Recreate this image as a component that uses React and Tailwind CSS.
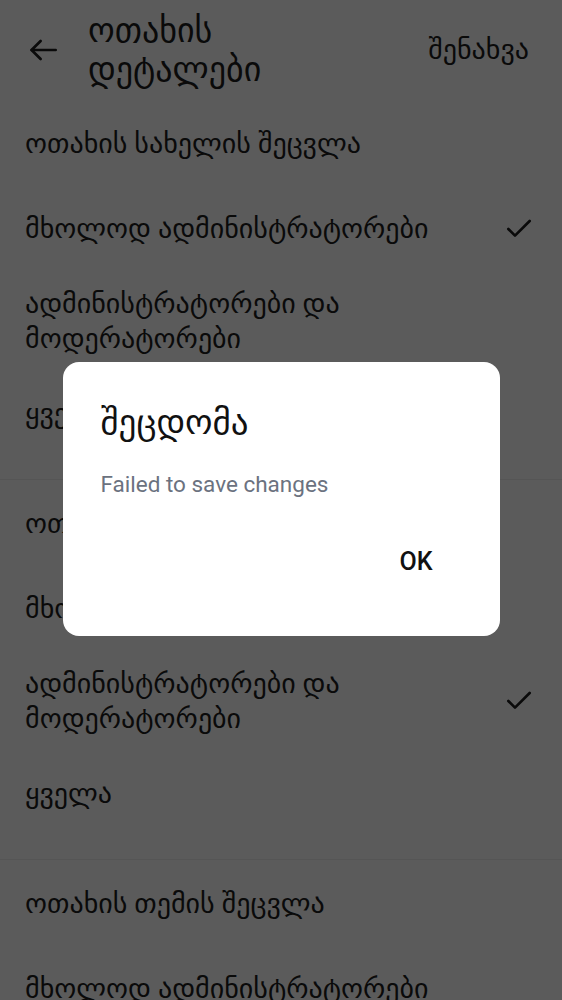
import { Check } from "lucide-react";

const geo = { fontFamily: "Roboto, 'DejaVu Sans', sans-serif" };

function Option({ label, checked }) {
  return (
    <div className="flex items-center justify-between py-[20px] pl-[25px] pr-[27px]">
      <span className="text-[28px] leading-[35px] text-[#1c1c1c] max-w-[440px]">{label}</span>
      {checked && <Check size={32} strokeWidth={2} className="text-[#1c1c1c] shrink-0" />}
    </div>
  );
}

function Section({ title, selected, last }) {
  const options = [
    "მხოლოდ ადმინისტრატორები",
    "ადმინისტრატორები და მოდერატორები",
    "ყველა",
  ];
  return (
    <div className={`pt-[6px] pb-[28px] ${last ? "" : "border-b border-[#eeeeee]"}`}>
      <div className="py-[20px] pl-[25px] mb-[10px] text-[28px] leading-[35px] text-[#1c1c1c] whitespace-nowrap">
        {title}
      </div>
      {options.map((o, i) => (
        <Option key={o} label={o} checked={i === selected} />
      ))}
    </div>
  );
}

export default function App() {
  return (
    <div className="relative w-[562px] h-[1000px] overflow-hidden bg-white" style={geo}>
      {/* header */}
      <div className="flex items-center h-[100px] pl-[24px] pr-[33px]">
        <svg width="38" height="38" viewBox="0 0 24 24" fill="none" stroke="#1c1c1c" strokeWidth="1.7" strokeLinecap="round" strokeLinejoin="round">
          <path d="M20 12H4.8" />
          <path d="M10.5 6.3 4.8 12l5.7 5.7" />
        </svg>
        <div className="ml-[26px] text-[34px] leading-[39px] text-[#1c1c1c] w-[200px]">
          ოთახის დეტალები
        </div>
        <div className="ml-auto text-[28px] text-[#1c1c1c]">შენახვა</div>
      </div>

      <Section title="ოთახის სახელის შეცვლა" selected={0} />
      <Section title="ოთახის აღწერის შეცვლა" selected={1} />
      <Section title="ოთახის თემის შეცვლა" selected={1} last />

      {/* overlay */}
      <div className="absolute inset-0 bg-black/[0.643] flex items-start justify-center">
        <div className="mt-[362px] w-[437px] h-[274px] bg-white rounded-[16px] pt-[39px] px-[38px] flex flex-col">
          <div className="text-[35px] leading-[44px] text-[#111111]">შეცდომა</div>
          <div className="mt-[24px] text-[22.5px] leading-[30px] text-[#6b7280]" style={{ fontFamily: "Roboto, sans-serif" }}>
            Failed to save changes
          </div>
          <div className="mt-[48px] flex justify-end pr-[29px]">
            <span className="text-[25px] leading-[30px] font-medium text-[#111111]" style={{ fontFamily: "Roboto, sans-serif" }}>OK</span>
          </div>
        </div>
      </div>
    </div>
  );
}
